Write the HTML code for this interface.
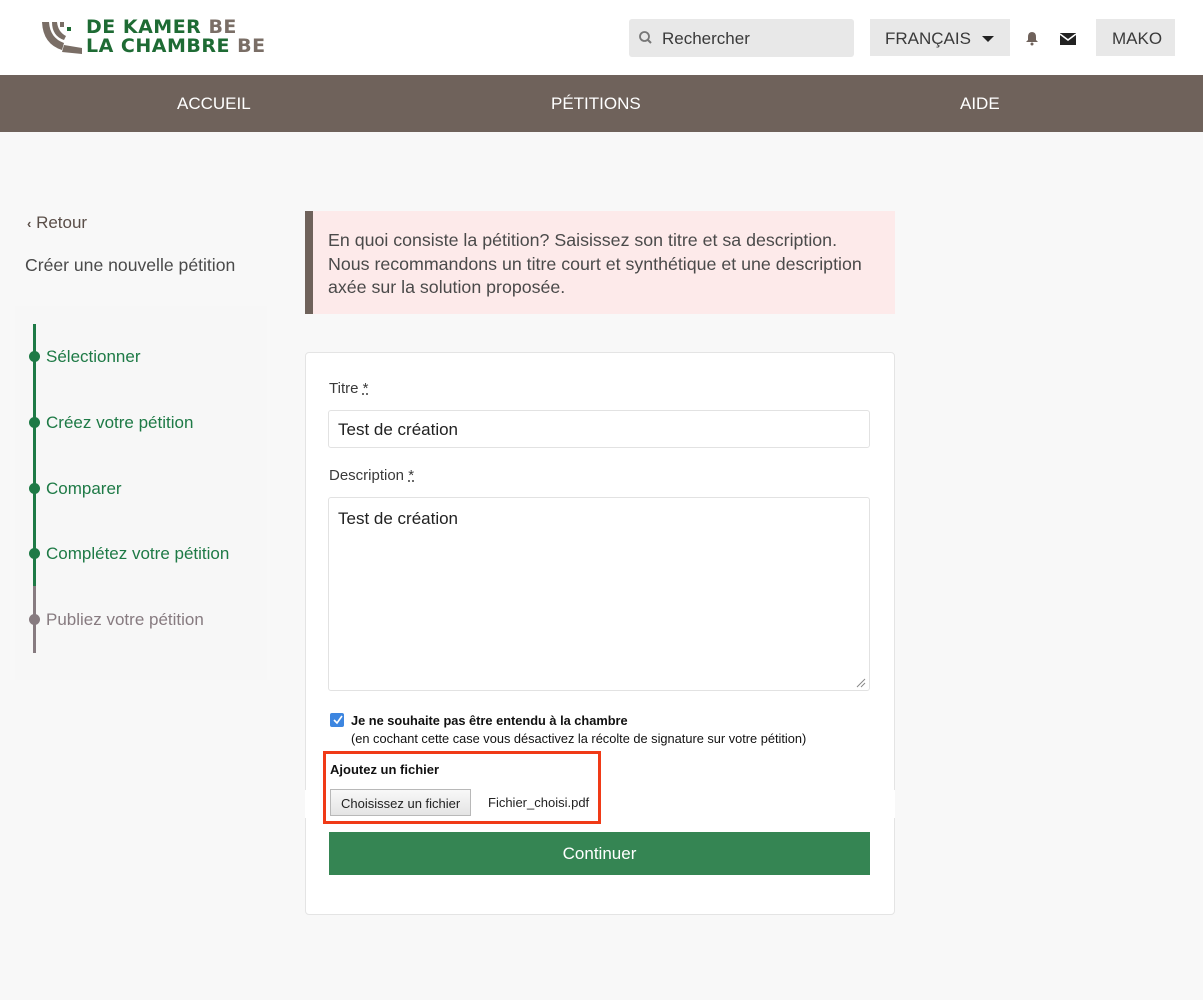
<!DOCTYPE html>
<html><head><meta charset="utf-8">
<style>
*{box-sizing:border-box;margin:0;padding:0}
body{width:1203px;height:1000px;background:#f8f8f8;font-family:"Liberation Sans","DejaVu Sans",sans-serif;color:#3a3a3a;position:relative;overflow:hidden}
.abs{position:absolute}
header{position:absolute;left:0;top:0;width:1203px;height:75px;background:#fff}
nav{position:absolute;left:0;top:75px;width:1203px;height:57px;background:#6f625b;color:#fff;font-size:17px}
nav span{position:absolute;top:19px}
.logo{font-family:"DejaVu Sans",sans-serif;font-weight:bold;font-size:19px;line-height:19px;color:#1e6b34;letter-spacing:0.5px}
.logo b{color:#7a6e66}
</style></head><body>
<header>
  <svg class="abs" style="left:40px;top:18px" width="44" height="36" viewBox="0 0 44 36">
    <path d="M2 4 L9 4 Q10 20 24 25 L22 32 Q3 26 2 4Z" fill="#7a6e66"/>
    <path d="M12 4 L17 4 Q18 14 26 18 L24 22 Q12 18 12 4Z" fill="#7a6e66"/>
    <path d="M20 4 L24 4 L24 9 L20 9Z" fill="#7a6e66"/>
    <path d="M24 27 L42 30 L42 36 L22 34Z" fill="#7a6e66"/>
    <rect x="27" y="9" width="4" height="4" fill="#1e6b34"/>
  </svg>
  <div class="abs logo" style="left:86px;top:18px">DE KAMER <b>BE</b><br>LA CHAMBRE <b>BE</b></div>
  <div class="abs" style="left:629px;top:19px;width:225px;height:38px;background:#e8e8e8;border-radius:3px;font-size:17px;padding:10px 0 0 33px">Rechercher</div>
  <svg class="abs" style="left:638px;top:30px" width="16" height="16" viewBox="0 0 16 16"><circle cx="6.5" cy="6.5" r="4.5" stroke="#777" stroke-width="1.8" fill="none"/><path d="M10 10 L13 13" stroke="#777" stroke-width="2"/></svg>
  <div class="abs" style="left:870px;top:19px;width:140px;height:37px;background:#e8e8e8;font-size:17px;padding:10px 0 0 15px">FRANÇAIS</div>
  <svg class="abs" style="left:982px;top:36px" width="12" height="7"><path d="M0 0 L12 0 L6 6Z" fill="#222"/></svg>
  <svg class="abs" style="left:1025px;top:31px" width="14" height="15" viewBox="0 0 14 15"><path d="M7 1 Q3 1 3 6 L3 9 L1 11 L13 11 L11 9 L11 6 Q11 1 7 1Z" fill="#6f625b"/><circle cx="7" cy="13" r="1.5" fill="#6f625b"/></svg>
  <svg class="abs" style="left:1060px;top:33px" width="16" height="12" viewBox="0 0 16 12"><rect width="16" height="12" fill="#222"/><path d="M0 1 L8 7 L16 1" stroke="#fff" stroke-width="1.5" fill="none"/></svg>
  <div class="abs" style="left:1096px;top:19px;width:79px;height:37px;background:#e8e8e8;font-size:17px;padding:10px 0 0 16px">MAKO</div>
</header>
<nav><span style="left:177px">ACCUEIL</span><span style="left:551px">PÉTITIONS</span><span style="left:960px">AIDE</span></nav>

<div class="abs" style="left:27px;top:213px;font-size:17px;color:#5a4e48"><span style="font-size:13px;font-weight:bold">‹</span> Retour</div>
<div class="abs" style="left:25px;top:255px;font-size:17.6px;color:#4a4a4a">Créer une nouvelle pétition</div>

<div class="abs" style="left:15px;top:306px;width:252px;height:374px;background:#f7f7f7"></div>
<div class="abs" style="left:33px;top:324px;width:3px;height:262px;background:#1e7a46"></div>
<div class="abs" style="left:33px;top:586px;width:3px;height:67px;background:#877b80"></div>
<div style="font-size:17px">
 <div class="abs" style="left:29px;top:351px;width:11px;height:11px;border-radius:50%;background:#1e7a46"></div><div class="abs" style="left:46px;top:347px;color:#1e7a46">Sélectionner</div>
 <div class="abs" style="left:29px;top:417px;width:11px;height:11px;border-radius:50%;background:#1e7a46"></div><div class="abs" style="left:46px;top:413px;color:#1e7a46">Créez votre pétition</div>
 <div class="abs" style="left:29px;top:483px;width:11px;height:11px;border-radius:50%;background:#1e7a46"></div><div class="abs" style="left:46px;top:479px;color:#1e7a46">Comparer</div>
 <div class="abs" style="left:29px;top:548px;width:11px;height:11px;border-radius:50%;background:#1e7a46"></div><div class="abs" style="left:46px;top:544px;color:#1e7a46">Complétez votre pétition</div>
 <div class="abs" style="left:29px;top:614px;width:11px;height:11px;border-radius:50%;background:#877b80"></div><div class="abs" style="left:46px;top:610px;color:#877b80">Publiez votre pétition</div>
</div>

<div class="abs" style="left:305px;top:211px;width:590px;height:103px;background:#fdeaea;border-left:8px solid #6f625b;padding:18px 0 0 15px;font-size:17.8px;line-height:23.5px;color:#4a4a4a;white-space:nowrap">En quoi consiste la pétition? Saisissez son titre et sa description.<br>Nous recommandons un titre court et synthétique et une description<br>axée sur la solution proposée.</div>

<div class="abs" style="left:305px;top:352px;width:590px;height:563px;background:#fff;border:1px solid #e4e4e4;border-radius:4px"></div>
<div class="abs" style="left:329px;top:380px;font-size:15px">Titre <u style="text-decoration-style:dotted">*</u></div>
<div class="abs" style="left:328px;top:410px;width:542px;height:38px;border:1px solid #e2e2e2;border-radius:3px;font-size:17px;padding:9px 0 0 9px;color:#222">Test de création</div>
<div class="abs" style="left:329px;top:467px;font-size:15px">Description <u style="text-decoration-style:dotted">*</u></div>
<div class="abs" style="left:328px;top:497px;width:542px;height:194px;border:1px solid #e2e2e2;border-radius:3px;font-size:17px;padding:11px 0 0 9px;color:#222">Test de création</div>
<svg class="abs" style="left:856px;top:678px" width="10" height="10"><path d="M1 9 L9 1 M5 9 L9 5" stroke="#888"/></svg>

<div class="abs" style="left:330px;top:713px;width:14px;height:14px;background:#3d86e0;border-radius:2px"></div>
<svg class="abs" style="left:332px;top:714px" width="12" height="12"><path d="M2 6 L5 9 L10 2" stroke="#fff" stroke-width="1.6" fill="none"/></svg>
<div class="abs" style="left:351px;top:713px;font-size:12.8px;font-weight:bold;color:#111">Je ne souhaite pas être entendu à la chambre</div>
<div class="abs" style="left:351px;top:731px;font-size:12.8px;color:#111">(en cochant cette case vous désactivez la récolte de signature sur votre pétition)</div>

<div class="abs" style="left:305px;top:790px;width:590px;height:28px;background:#fff"></div>
<div class="abs" style="left:323px;top:751px;width:278px;height:73px;border:3px solid #f03a17;background:#fff"></div>
<div class="abs" style="left:330px;top:762px;font-size:13px;font-weight:bold;color:#111">Ajoutez un fichier</div>
<div class="abs" style="left:330px;top:789px;width:141px;height:27px;border:1px solid #b8b8b8;background:linear-gradient(#f8f8f8,#e4e4e4);font-size:13px;padding:6px 0 0 10px;color:#222">Choisissez un fichier</div>
<div class="abs" style="left:488px;top:795px;font-size:13px;color:#222">Fichier_choisi.pdf</div>

<div class="abs" style="left:329px;top:832px;width:541px;height:43px;background:#358553;color:#fff;font-size:17px;text-align:center;padding-top:12px">Continuer</div>
</body></html>
